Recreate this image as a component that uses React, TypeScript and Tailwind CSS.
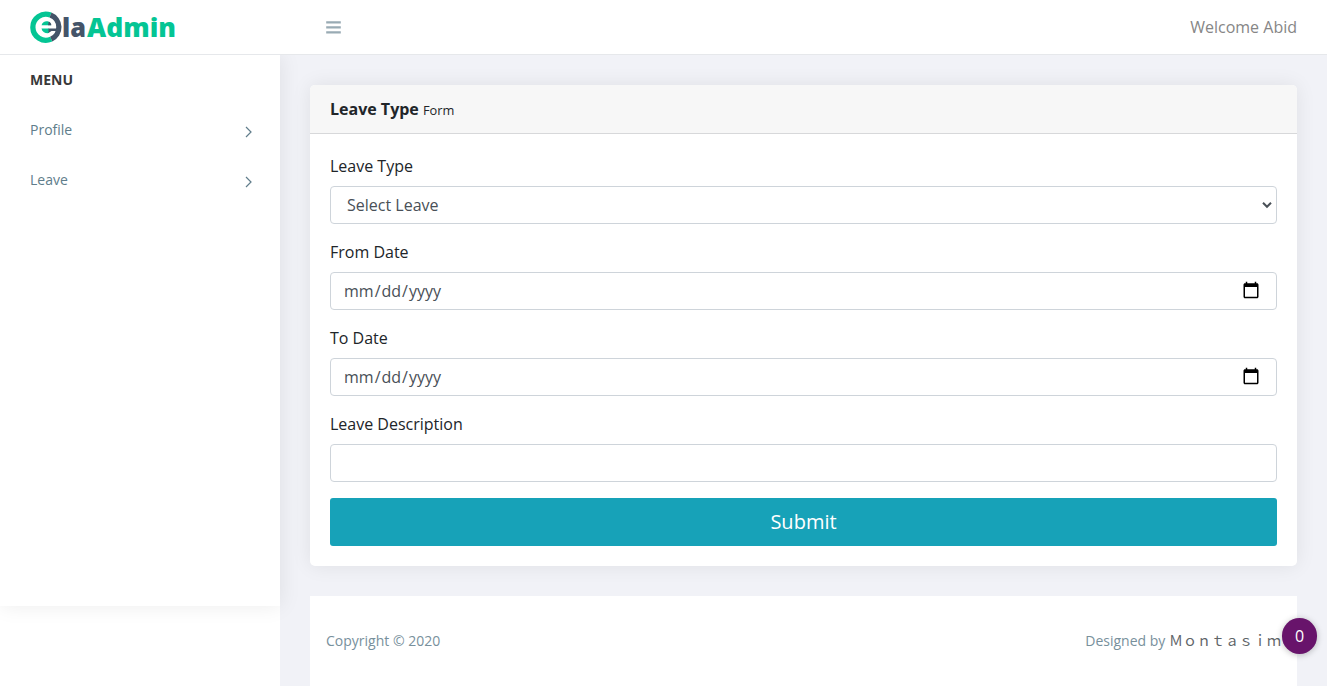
import React from "react";

const shell = "flex h-[38px] items-center rounded border border-[#ced4da] bg-white";
const inputText = "h-6 flex-1 bg-transparent text-base leading-6 text-[#495057] outline-none";

function Logo() {
  return (
    <svg width="150" height="40" viewBox="0 0 150 40" className="mt-px block" aria-label="ElaAdmin">
      <path d="M20.5 7.1A13 13 0 1 0 21.2 31.1" fill="none" stroke="#04c594" strokeWidth="5.3" />
      <path d="M20.5 7.1A13 13 0 0 1 21.2 31.1" fill="none" stroke="#445469" strokeWidth="5.3" />
      <path d="M11.5 17.2C12.6 12.6 18.5 12 20.2 15L21 17.2Z" fill="#04c594" />
      <path d="M18.8 13.5C20.4 14.3 21.2 15.6 21.4 17.2H18Z" fill="#445469" />
      <path d="M11.5 20.4H19V25.1C15 25.6 12.1 23.4 11.5 20.4Z" fill="#04c594" />
      <path d="M18.5 20.4H29V23H21.5L18.5 25.1Z" fill="#445469" />
      <text x="32" y="29" fontFamily="Open Sans, sans-serif" fontSize="27" fontWeight="800" fill="#445469" textLength="24" lengthAdjust="spacingAndGlyphs">la</text>
      <text x="57" y="29" fontFamily="Open Sans, sans-serif" fontSize="27" fontWeight="800" fill="#04c594" textLength="89" lengthAdjust="spacingAndGlyphs">Admin</text>
    </svg>
  );
}

function MenuItem({ label }: { label: string }) {
  return (
    <li className="flex h-[50px] items-center justify-between text-sm text-[#607d8b]">
      <span>{label}</span>
      <svg width="7" height="12" viewBox="0 0 7 12" className="mt-1 block">
        <path d="M1 1L6 6L1 11" fill="none" stroke="#607d8b" strokeWidth="1.2" />
      </svg>
    </li>
  );
}

function Field({ label, children }: { label: string; children: React.ReactNode }) {
  return (
    <label className="mb-4 block">
      <span className="mb-2 block leading-6">{label}</span>
      {children}
    </label>
  );
}

function DateInput() {
  return (
    <span className={`${shell} pr-4 pl-3`}>
      <input type="date" className={`${inputText} [&::-webkit-calendar-picker-indicator]:hidden`} />
      <svg width="18" height="18" viewBox="0 0 24 24" className="-mt-0.5 block">
        <path d="M20 3h-1V1h-2v2H7V1H5v2H4c-1.1 0-2 .9-2 2v16c0 1.1.9 2 2 2h16c1.1 0 2-.9 2-2V5c0-1.1-.9-2-2-2zm0 18H4V8h16v13z" fill="#000" />
      </svg>
    </span>
  );
}

export default function App() {
  return (
    <div className="relative flex h-[686px] flex-col overflow-hidden bg-white font-['Open_Sans',sans-serif] text-base text-[#212529]">
      <header className="z-10 flex h-[55px] shrink-0 items-center border-b border-[#e6e8eb] bg-white px-[30px]">
        <div className="w-[296px]">
          <Logo />
        </div>
        <svg width="15" height="14" viewBox="0 0 15 14" className="block">
          <path d="M.2 1.2h14.6v2.3H.2zM.2 6.2h14.6v2.3H.2zM.2 11.2h14.6v2.3H.2z" fill="#99abb4" />
        </svg>
        <span className="ml-auto text-[#868686]">Welcome Abid</span>
      </header>

      <div className="flex min-h-0 flex-1">
        <aside className="relative z-[1] h-[551px] w-[280px] shrink-0 bg-white px-[30px] shadow-[1px_0_20px_rgba(0,0,0,0.08)]">
          <h3 className="flex h-[50px] items-center text-sm font-bold text-[#393939]">MENU</h3>
          <ul className="-mr-0.5">
            <MenuItem label="Profile" />
            <MenuItem label="Leave" />
          </ul>
        </aside>

        <main className="min-w-0 flex-1 bg-[#f1f2f7] px-[30px] pt-[30px]">
          <section className="mb-[30px] h-[481px] rounded-[5px] bg-white shadow-[0_0_20px_rgba(0,0,0,0.08)]">
            <div className="h-[49px] rounded-t-[5px] border-b border-[#d7d8da] bg-[#f7f7f7] px-5 py-3 leading-6">
              <strong className="font-bold">Leave Type</strong> <small className="text-[12.8px]">Form</small>
            </div>
            <form className="p-5">
              <Field label="Leave Type">
                <span className={`${shell} pr-1 pl-4`}>
                  <select className={`${inputText} appearance-none`}>
                    <option>Select Leave</option>
                  </select>
                  <svg width="10" height="8" viewBox="0 0 10 8" className="block">
                    <path d="M1 1.8L5 5.8L9 1.8" fill="none" stroke="#495057" strokeWidth="2" />
                  </svg>
                </span>
              </Field>
              <Field label="From Date">
                <DateInput />
              </Field>
              <Field label="To Date">
                <DateInput />
              </Field>
              <Field label="Leave Description">
                <span className={`${shell} px-3`}>
                  <input type="text" className={inputText} />
                </span>
              </Field>
              <button type="button" className="block h-12 w-full rounded-[3px] bg-[#17a2b8] text-xl text-white">
                Submit
              </button>
            </form>
          </section>
          <footer className="flex h-[90px] items-center justify-between bg-white px-4 text-sm text-[#78909c]">
            <span>Copyright © 2020</span>
            <span>
              Designed by{" "}
              <span className="font-['Noto_Sans_CJK_JP',sans-serif] leading-none text-[#606468]">
                {"\uFF2D\uFF4F\uFF4E\uFF54\uFF41\uFF53\uFF49\uFF4D"}
              </span>
            </span>
          </footer>
        </main>
      </div>

      <div className="absolute top-[618px] left-[1282px] z-20 flex h-9 w-[35px] items-center justify-center rounded-full bg-[#68146b] pb-px text-base font-medium text-white shadow-[0_1px_6px_rgba(0,0,0,0.25)]">
        0
      </div>
    </div>
  );
}
